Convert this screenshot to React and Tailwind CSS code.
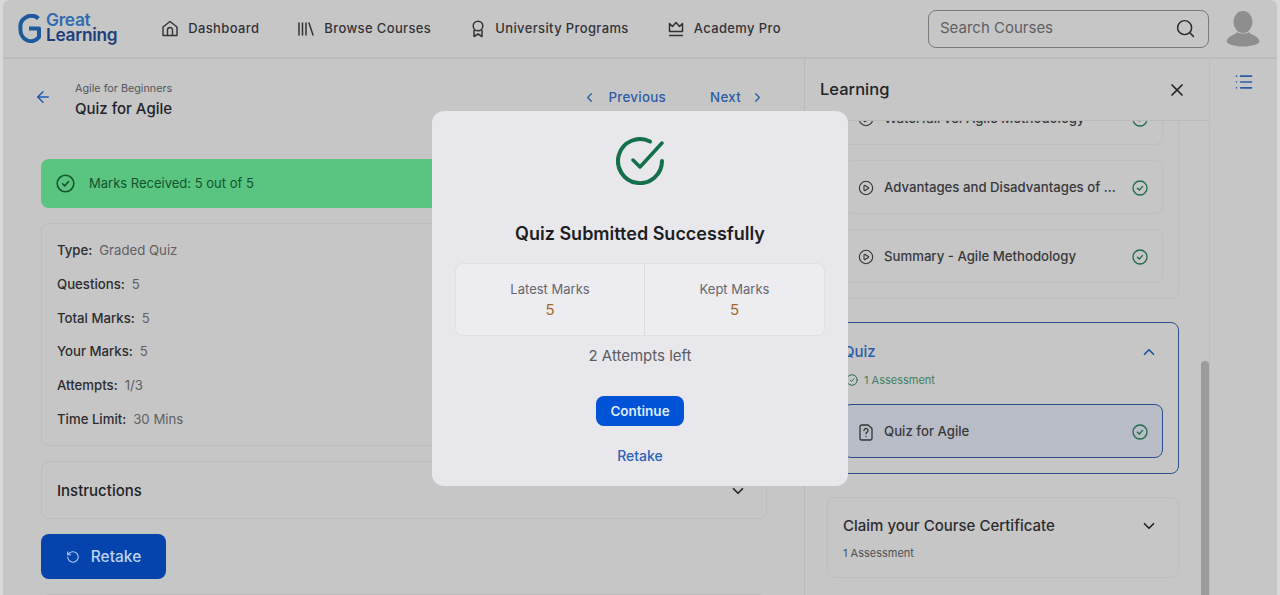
import React from "react";
import { ChevronLeft, ChevronRight, ChevronDown, ChevronUp, Search, X, ArrowLeft, List, RotateCcw, CirclePlay } from "lucide-react";

const Check = ({ size = 16, color = "#1f6b4a", className = "" }) => (
  <svg width={size} height={size} viewBox="0 0 16 16" fill="none" stroke={color} strokeWidth="1.3" strokeLinecap="round" strokeLinejoin="round" className={className}>
    <circle cx="8" cy="8" r="7" />
    <path d="M5.4 8.2l1.9 1.8 3.3-3.6" />
  </svg>
);

const HomeIcon = () => (
  <svg width="16" height="17" viewBox="0 0 16 17" fill="none" stroke="#333" strokeWidth="1.4" strokeLinejoin="round">
    <path d="M1 7L8 1.500 15 7v8.500H1z" />
    <path d="M5.500 15.500V10a2.500 2.500 0 015 0v5.500" />
  </svg>
);

const LibraryIcon = () => (
  <svg width="16" height="14" viewBox="0 0 16 14" fill="none" stroke="#333" strokeWidth="1.500" strokeLinecap="round">
    <path d="M1 1v12M4.500 1v12M8 1v12M11 1l4 12" />
  </svg>
);

const Ribbon = () => (
  <svg width="14" height="18" viewBox="0 0 14 18" fill="none" stroke="#333" strokeWidth="1.500" strokeLinejoin="round">
    <circle cx="7" cy="6" r="4.800" />
    <path d="M3 10v6.500L7 14l4 2.500V10" />
  </svg>
);

const Crown = () => (
  <svg width="16" height="16" viewBox="0 0 16 16" fill="none" stroke="#333" strokeWidth="1.500" strokeLinejoin="round" strokeLinecap="round">
    <path d="M1.500 2.500l3 3L8 1.500l3.500 4 3-3V10.500h-13z" />
    <path d="M1.500 14.500h13" />
  </svg>
);

const QuizDoc = () => (
  <svg width="14" height="17" viewBox="0 0 14 17" fill="none" stroke="#333" strokeWidth="1.300" strokeLinecap="round" strokeLinejoin="round">
    <path d="M2.500 1h6.500l4 3.500v10a1.500 1.500 0 01-1.500 1.500h-9A1.500 1.500 0 011 14.500v-12A1.500 1.500 0 012.500 1z" />
    <path d="M5 6.500a2 2 0 113.200 1.600c-.7.500-1.200.9-1.200 1.700" />
    <path d="M7 12.500v.1" />
  </svg>
);

const Logo = () => (
  <div className="flex items-center">
    <svg width="24" height="29" viewBox="0 0 24 29" fill="none" className="-mt-[1px] shrink-0">
      <path d="M20.500 4.500A11 11 0 0 0 2.500 14.500a10.500 11.500 0 0 0 18.500 8.500V14.500H11" stroke="#1c5a9c" strokeWidth="4" strokeLinejoin="round" />
    </svg>
    <div className="-mt-[3px] ml-[4px] flex flex-col font-semibold text-[17.300px] leading-[15px] tracking-[-0.3px]">
      <span className="text-[#2f6cb0]">Great</span>
      <span className="text-[#1d3f7c]">Learning</span>
    </div>
  </div>
);

const NavItem = ({ icon, label, narrow }) => (
  <div className="flex items-center gap-[10px] text-[13px] font-medium tracking-[0.37px] text-[#333338]">
    <span className={`flex justify-center ${narrow ? "w-[15px]" : "w-4"}`}>{icon}</span>
    <span>{label}</span>
  </div>
);

const Row = ({ k, v }) => (
  <div className="flex h-[33.700px] items-center gap-[7px] text-[13.200px]">
    <span className="font-medium text-[#2c2c30]">{k}</span>
    <span className="text-[#5f5f64]">{v}</span>
  </div>
);

const Lesson = ({ label, icon, active }) => (
  <div className={`flex h-[54px] items-center rounded-lg border pl-[14px] pr-[14px] pt-[2px] ${active ? "border-[#2b4f8f] bg-[#b8bcc6]" : "border-[#bebebe]"}`}>
    <span className="flex w-[16px] justify-center">{icon}</span>
    <span className="ml-[10px] min-w-0 flex-1 truncate text-[13.200px] font-medium text-[#38383c]">{label}</span>
    <Check size={16} />
  </div>
);

export default function App() {
  const play = <CirclePlay size={16} strokeWidth={1.600} color="#333" />;
  return (
    <div className="relative h-[595px] w-[1280px] overflow-hidden bg-[#d9d9d9] px-[3px] font-['Inter',sans-serif] text-[#232327]">
      <div className="flex h-full flex-col rounded-tl-md rounded-tr-md bg-[#c6c6c6]">
        <header className="flex h-[59px] shrink-0 items-center border-b-2 border-[#bcbcbc] pl-[15px] pr-[17px]">
          <Logo />
          <nav className="ml-[45px] flex items-center gap-[39px]">
            <NavItem icon={<HomeIcon />} label="Dashboard" />
            <NavItem icon={<LibraryIcon />} label="Browse Courses" />
            <NavItem icon={<Ribbon />} label="University Programs" narrow />
            <NavItem icon={<Crown />} label="Academy Pro" />
          </nav>
          <div className="ml-auto flex h-[38px] w-[281px] items-center justify-between rounded-lg border border-[#7a7a7a] pl-[11px] pr-[12px] text-[15px] text-[#5e5e62]">
            <span>Search Courses</span>
            <Search size={21} strokeWidth={1.700} color="#2a2a2a" />
          </div>
          <svg width="34" height="36" viewBox="0 0 34 36" fill="#8e8e8e" className="ml-[17px] shrink-0">
            <ellipse cx="17" cy="11" rx="9.500" ry="11" />
            <path d="M11 21c-1 3-10 4-10.500 9.500C1 33 8 35.500 17 35.500s16-2.500 16.500-5C33 25 24 24 23 21c-2 2-10 2-12 0z" />
          </svg>
        </header>

        <div className="flex min-h-0 flex-1">
          <main className="w-[802px] shrink-0 overflow-hidden border-r border-[#b9b9b9] pl-[38px] pr-[37px]">
            <div className="flex h-[100px] items-start pt-[22px]">
              <ArrowLeft size={18} strokeWidth={2} color="#1f5bb0" className="mt-[7px] -ml-[7px]" />
              <div className="ml-[23px] flex flex-col">
                <span className="text-[10.800px] leading-[15px] text-[#55555a]">Agile for Beginners</span>
                <span className="mt-[3px] text-[15px] font-medium leading-[20px] text-[#232327]">Quiz for Agile</span>
              </div>
              <div className="ml-auto flex items-center pr-[2px] pt-[7px] text-[13.300px] font-medium tracking-[0.3px] text-[#2a5ca8]">
                <ChevronLeft size={15} strokeWidth={2} />
                <span className="ml-[11px]">Previous</span>
                <span className="ml-[44px]">Next</span>
                <ChevronRight size={15} strokeWidth={2} className="ml-[9px]" />
              </div>
            </div>
            <div className="flex h-[49px] items-center gap-[14px] rounded-lg bg-[#5ac481] pl-[15px] text-[13px] text-[#14532d]">
              <Check size={19} color="#14532d" />
              <span>Marks Received: 5 out of 5</span>
            </div>
            <div className="mt-[15px] flex h-[223px] flex-col justify-center rounded-lg border border-[#bcbcbc] pl-[15px] pt-[2px]">
              <Row k="Type:" v="Graded Quiz" />
              <Row k="Questions:" v="5" />
              <Row k="Total Marks:" v="5" />
              <Row k="Your Marks:" v="5" />
              <Row k="Attempts:" v="1/3" />
              <Row k="Time Limit:" v="30 Mins" />
            </div>
            <div className="mt-[15px] flex h-[58px] items-center justify-between rounded-lg border border-[#bcbcbc] pl-[15px] pr-[19px] pt-[2px] text-[15px] font-medium">
              <span>Instructions</span>
              <ChevronDown size={18} strokeWidth={2.200} color="#222" />
            </div>
            <button className="mt-[15px] flex h-[45px] w-[125px] items-center justify-center gap-[11px] rounded-lg bg-[#0444ac] pt-[1px] text-[15.500px] font-medium text-[#bcd2f2]">
              <RotateCcw size={14} strokeWidth={1.800} />
              <span>Retake</span>
            </button>
            <div className="mt-[15px] h-[20px] rounded-lg border border-[#bcbcbc]" />
          </main>

          <aside className="flex w-[405px] shrink-0 flex-col border-r border-[#bdbdbd]">
            <div className="flex h-[62px] shrink-0 items-center justify-between border-b border-[#bababa] pl-[15px] pr-[22px]">
              <span className="-mt-[1px] text-[16.500px] font-medium">Learning</span>
              <X size={20} strokeWidth={2} color="#222" />
            </div>
            <div className="relative min-h-0 flex-1 overflow-hidden pl-[22px] pr-[30px]">
              <div className="-mt-[51px] flex flex-col">
                <div className="flex flex-col gap-[15px] rounded-lg border border-[#bebebe] px-[15px] pb-[15px] pt-[20px]">
                  <Lesson label="Waterfall vs. Agile Methodology" icon={play} />
                  <Lesson label="Advantages and Disadvantages of ..." icon={play} />
                  <Lesson label="Summary - Agile Methodology" icon={play} />
                </div>
                <div className="mt-[23px] rounded-lg border border-[#2b4f8f] px-[15px] pb-[15px] pt-[20px]">
                  <div className="flex items-center justify-between pr-[5px]">
                    <span className="text-[15px] font-medium leading-[18px] text-[#2a5ca8]">Quiz</span>
                    <ChevronUp size={18} strokeWidth={2.200} color="#1f4f9c" />
                  </div>
                  <div className="mb-[18px] mt-[13px] flex items-center gap-[6px] pl-[3px] text-[11px] leading-[12px] text-[#3f8060]">
                    <Check size={12} />
                    <span>1 Assessment</span>
                  </div>
                  <Lesson label="Quiz for Agile" icon={<QuizDoc />} active />
                </div>
                <div className="mt-[23px] h-[81px] rounded-lg border border-[#bebebe] px-[15px] pt-[18px]">
                  <div className="flex items-center justify-between pr-[5px]">
                    <span className="text-[15px] font-medium leading-[20px] text-[#2c2c30]">Claim your Course Certificate</span>
                    <ChevronDown size={18} strokeWidth={2.200} color="#222" />
                  </div>
                  <div className="mt-[11px] text-[11px] leading-[12px] text-[#4f4f54]">1 Assessment</div>
                </div>
              </div>
              <div className="absolute bottom-0 right-0 top-[240px] w-[8px] rounded-t bg-[#9c9c9c]" />
            </div>
          </aside>

          <div className="flex flex-1 justify-center pt-[13px]">
            <List size={20} strokeWidth={2} color="#2a5ca8" />
          </div>
        </div>
      </div>

      <div className="absolute left-[432px] top-[111px] flex h-[375px] w-[416px] flex-col items-center rounded-xl bg-[#e8e7ec] px-[23px] pt-[26px]">
        <svg width="48" height="48" viewBox="0 0 48 48" fill="none" stroke="#14704a" strokeWidth="4" strokeLinecap="round" strokeLinejoin="round">
          <path d="M34 4.500A22 22 0 1 0 46 24" />
          <path d="M17 23l7 7L46 6" strokeWidth="3.500" />
        </svg>
        <h2 className="mt-[37px] text-[18px] font-semibold leading-[24px] text-[#1e1e22]">Quiz Submitted Successfully</h2>
        <div className="mt-[17px] flex h-[73px] w-full rounded-lg border border-[#e0dfe5] bg-[#edecf1]">
          <div className="flex w-[189px] shrink-0 flex-col items-center justify-center border-r border-[#dddce2]">
            <span className="text-[13px] leading-[18px] text-[#66666c]">Latest Marks</span>
            <span className="mt-[2px] text-[15px] leading-[20px] text-[#a8672a]">5</span>
          </div>
          <div className="flex flex-1 flex-col items-center justify-center">
            <span className="text-[13px] leading-[18px] text-[#66666c]">Kept Marks</span>
            <span className="mt-[2px] text-[15px] leading-[20px] text-[#a8672a]">5</span>
          </div>
        </div>
        <p className="mt-[10px] text-[15px] leading-[20px] text-[#5c5c62]">2 Attempts left</p>
        <button className="mt-[30px] flex h-[30px] w-[88px] items-center justify-center rounded-lg bg-[#0053d6] text-[13.500px] font-semibold text-[#dcebff]">Continue</button>
        <span className="mt-[21px] text-[14px] font-medium leading-[18px] text-[#2a63b5]">Retake</span>
      </div>
    </div>
  );
}
